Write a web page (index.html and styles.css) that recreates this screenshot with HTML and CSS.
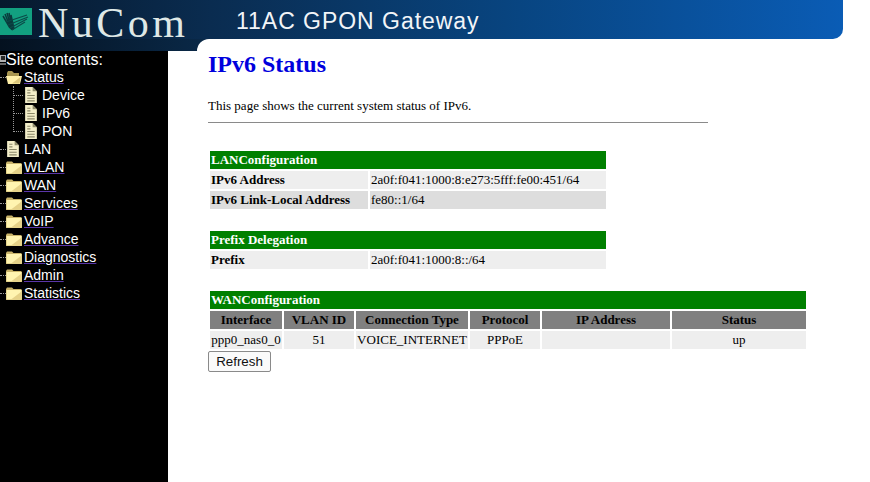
FILE: index.html
```html
<!DOCTYPE html>
<html lang="en">
<head>
	<meta charset="utf-8">
	<title>IPv6 Status</title>
	<link rel="stylesheet" href="styles.css">
</head>
<body>
	<svg class="defs" width="0" height="0">
		<symbol id="folder" viewBox="0 0 16 13">
			<path d="M0 2 L1 0.5 L6 0.5 L7.5 2 L15 2 L16 3 L16 13 L0 13 Z" fill="#c9b46a"/>
			<path d="M0.5 3 L15.5 3 L15.5 12.5 L0.5 12.5 Z" fill="#fff4b0"/>
			<path d="M5 12.5 L15.5 4.5 L15.5 12.5 Z" fill="#e6d288"/>
		</symbol>
		<symbol id="folderopen" viewBox="0 0 16 13">
			<path d="M1 2 L2 0 L6 0 L8 2 L13 2 L13 5 L1 5 Z" fill="#a8954f"/>
			<path d="M0 5 L16 5 L14 13 L2 13 Z" fill="#fff0a8"/>
			<path d="M6 12.5 L14.5 6 L13.5 12.5 Z" fill="#dcc77b"/>
		</symbol>
		<symbol id="doc" viewBox="0 0 11 15">
			<path d="M0 0 L7 0 L11 4 L11 15 L0 15 Z" fill="#f2edc8"/>
			<path d="M7 0 L11 4 L7 4 Z" fill="#8f8c6c"/>
			<path d="M2 3 H5 M2 5.5 H5 M2 8 H9 M2 10.5 H9 M2 13 H9" stroke="#8a8768" stroke-width="1"/>
		</symbol>
		<symbol id="root" viewBox="0 0 6 10">
			<path d="M0 0 H6 V7 H0 Z" fill="#b0b0b0"/>
			<path d="M1 1 H5 V5 H1 Z" fill="#2a2a2a"/>
			<path d="M0 9 H6" stroke="#cfcfcf"/>
		</symbol>
	</svg>

	<div class="header">
		<div class="banner">
			<div class="logo">
				<svg class="logo-mark" width="32" height="27" viewBox="0 0 32 27">
					<rect width="32" height="27" fill="#12a080"/>
					<path d="M3 8 L10 20 M5 6 L11 21 M7 5 L12 22 M9 5 L13 22 M11 7 L14 21" stroke="#0a3a3c" stroke-width="1.5" fill="none"/>
					<path d="M6 14 L27 7 M8 17 L28 9 M10 20 L27 11 M12 22 L25 14" stroke="#0b4a48" stroke-width="1.1" fill="none"/>
				</svg>
				<span class="logo-name">NuCom</span>
			</div>
			<div class="product">11AC GPON Gateway</div>
		</div>
		<div class="banner-foot">
			<div class="tab"></div>
		</div>
	</div>

	<div class="main">
		<div class="sidebar">
			<div class="site-title"><svg class="root-icon" width="6" height="10"><use href="#root"/></svg>Site contents:</div>
			<div class="row"><span class="dots"></span><svg class="ico-folder" width="16" height="13"><use href="#folderopen"/></svg><a class="link" href="#">Status</a></div>
			<div class="sub">
				<div class="row"><span class="dots dots-sub"></span><svg class="ico-doc" width="12" height="16"><use href="#doc"/></svg><span class="link-plain">Device</span></div>
				<div class="row"><span class="dots dots-sub"></span><svg class="ico-doc" width="12" height="16"><use href="#doc"/></svg><span class="link-plain">IPv6</span></div>
				<div class="row"><span class="dots dots-sub"></span><svg class="ico-doc" width="12" height="16"><use href="#doc"/></svg><span class="link-plain">PON</span></div>
			</div>
			<div class="row"><span class="dots"></span><svg class="ico-lan" width="12" height="16"><use href="#doc"/></svg><span class="link-plain">LAN</span></div>
			<div class="row"><span class="dots"></span><svg class="ico-folder" width="16" height="13"><use href="#folder"/></svg><a class="link" href="#">WLAN</a></div>
			<div class="row"><span class="dots"></span><svg class="ico-folder" width="16" height="13"><use href="#folder"/></svg><a class="link" href="#">WAN</a></div>
			<div class="row"><span class="dots"></span><svg class="ico-folder" width="16" height="13"><use href="#folder"/></svg><a class="link" href="#">Services</a></div>
			<div class="row"><span class="dots"></span><svg class="ico-folder" width="16" height="13"><use href="#folder"/></svg><a class="link" href="#">VoIP</a></div>
			<div class="row"><span class="dots"></span><svg class="ico-folder" width="16" height="13"><use href="#folder"/></svg><a class="link" href="#">Advance</a></div>
			<div class="row"><span class="dots"></span><svg class="ico-folder" width="16" height="13"><use href="#folder"/></svg><a class="link" href="#">Diagnostics</a></div>
			<div class="row"><span class="dots"></span><svg class="ico-folder" width="16" height="13"><use href="#folder"/></svg><a class="link" href="#">Admin</a></div>
			<div class="row"><span class="dots"></span><svg class="ico-folder" width="16" height="13"><use href="#folder"/></svg><a class="link" href="#">Statistics</a></div>
		</div>

		<div class="content">
			<h1 class="title">IPv6 Status</h1>
			<p class="intro">This page shows the current system status of IPv6.</p>
			<div class="rule"></div>

			<table class="info narrow">
				<colgroup><col class="c-key"><col class="c-val"></colgroup>
				<tr><th class="head" colspan="2">LANConfiguration</th></tr>
				<tr><td class="key">IPv6 Address</td><td class="light">2a0f:f041:1000:8:e273:5fff:fe00:451/64</td></tr>
				<tr><td class="key key-dark">IPv6 Link-Local Address</td><td class="dark">fe80::1/64</td></tr>
			</table>

			<table class="info narrow">
				<colgroup><col class="c-key"><col class="c-val"></colgroup>
				<tr><th class="head" colspan="2">Prefix Delegation</th></tr>
				<tr><td class="key">Prefix</td><td class="light">2a0f:f041:1000:8::/64</td></tr>
			</table>

			<table class="info wide">
				<colgroup>
					<col class="c-if"><col class="c-vlan"><col class="c-type">
					<col class="c-proto"><col class="c-ip"><col class="c-status">
				</colgroup>
				<tr><th class="head" colspan="6">WANConfiguration</th></tr>
				<tr>
					<th class="col">Interface</th>
					<th class="col">VLAN ID</th>
					<th class="col">Connection Type</th>
					<th class="col">Protocol</th>
					<th class="col">IP Address</th>
					<th class="col">Status</th>
				</tr>
				<tr>
					<td class="light center">ppp0_nas0_0</td>
					<td class="light center">51</td>
					<td class="light center">VOICE_INTERNET</td>
					<td class="light center">PPPoE</td>
					<td class="light center"></td>
					<td class="light center">up</td>
				</tr>
			</table>
			<button class="refresh" type="button">Refresh</button>
		</div>
	</div>
</body>
</html>
```

FILE: styles.css
```css
html, body {
	margin: 0;
	height: 100%;
	background: #fff;
}
body {
	display: flex;
	flex-direction: column;
	height: 482px;
	overflow: hidden;
	font-family: "Liberation Serif", serif;
}
.defs {
	display: block;
	height: 0;
}

/* top banner */
.header {
	width: 843px;
	height: 51px;
	flex: none;
}
.banner {
	display: flex;
	height: 39px;
	background: linear-gradient(90deg, #06192d 0%, #0a2c50 25%, #08447f 60%, #0a5cb5 100%);
	border-bottom-right-radius: 10px;
}
.logo {
	display: flex;
	align-items: flex-start;
	width: 236px;
	padding-top: 8px;
	box-sizing: border-box;
}
.logo-name {
	margin: -7px 0 0 6px;
	color: #dfe8e6;
	font-size: 42px;
	line-height: 44px;
	letter-spacing: 3.5px;
}
.product {
	color: #f2f5f8;
	font-family: "Liberation Sans", sans-serif;
	font-size: 23px;
	line-height: 23px;
	margin-top: 10px;
	letter-spacing: 0.97px;
}
.banner-foot {
	display: flex;
	width: 220px;
	height: 12px;
	background: linear-gradient(90deg, #04111f 0%, #0a2a4a 100%);
}
.tab {
	margin-left: 197px;
	flex: 1;
	background: #fff;
	border-top-left-radius: 12px;
}

/* left tree */
.main {
	display: flex;
	flex: 1;
}
.sidebar {
	width: 168px;
	flex: none;
	background: #000;
	color: #fff;
	font-family: "Liberation Sans", sans-serif;
	font-size: 14px;
}
.site-title {
	display: flex;
	align-items: center;
	height: 17px;
	font-size: 16px;
}
.root-icon {
	flex: none;
}
.row {
	display: flex;
	align-items: center;
	height: 18px;
}
.dots {
	flex: none;
	width: 6px;
	border-bottom: 1px dotted #999;
}
.sub {
	margin-left: 13px;
	border-left: 1px dotted #999;
	height: 46px;
	margin-bottom: 8px;
}
.dots-sub {
	width: 9px;
}
.ico-folder {
	margin-right: 2px;
	flex: none;
}
.ico-doc {
	margin: 0 5px 0 2px;
	flex: none;
}
.ico-lan {
	margin: 0 5px 0 1px;
	flex: none;
}
.link {
	color: #fff;
	text-decoration: underline;
	text-decoration-color: #5a35a8;
}
.link-plain {
	color: #fff;
}

/* page body */
.content {
	flex: 1;
	padding-left: 40px;
	font-size: 13px;
	color: #000;
}
.title {
	margin: 0;
	height: 47px;
	color: #0000dd;
	font-size: 24px;
	line-height: 27px;
}
.intro {
	margin: 0;
	height: 24px;
	line-height: 15px;
	font-size: 13px;
}
.rule {
	width: 500px;
	height: 1px;
	background: #8a8a8a;
	margin-bottom: 26px;
}
.info {
	border-spacing: 2px;
	border-collapse: separate;
	margin-bottom: 18px;
	table-layout: fixed;
}
.info td, .info th {
	height: 18px;
	padding: 0 1px;
	box-sizing: border-box;
	font-size: 13px;
	line-height: 14px;
}
.narrow {
	width: 400px;
}
.wide {
	width: 600px;
	margin-bottom: 0;
}
.c-key { width: 158px; }
.c-val { width: 236px; }
.c-if { width: 72px; }
.c-vlan { width: 70px; }
.c-type { width: 112px; }
.c-proto { width: 70px; }
.c-ip { width: 128px; }
.c-status { width: 134px; }
.head {
	background: #008000;
	color: #fff;
	text-align: left;
}
.key {
	background: #eee;
	font-weight: bold;
}
.key-dark {
	background: #ddd;
}
.light {
	background: #eee;
}
.dark {
	background: #ddd;
}
.center {
	text-align: center;
}
.info .col {
	background: #808080;
	color: #000;
	text-align: center;
}
.refresh {
	display: block;
	width: 63px;
	height: 21px;
	padding: 0 0 1px;
	background: #fafafa;
	border: 1px solid #8a8a8a;
	border-radius: 2px;
	font-family: "Liberation Sans", sans-serif;
	font-size: 13.33px;
	color: #111;
}
```
